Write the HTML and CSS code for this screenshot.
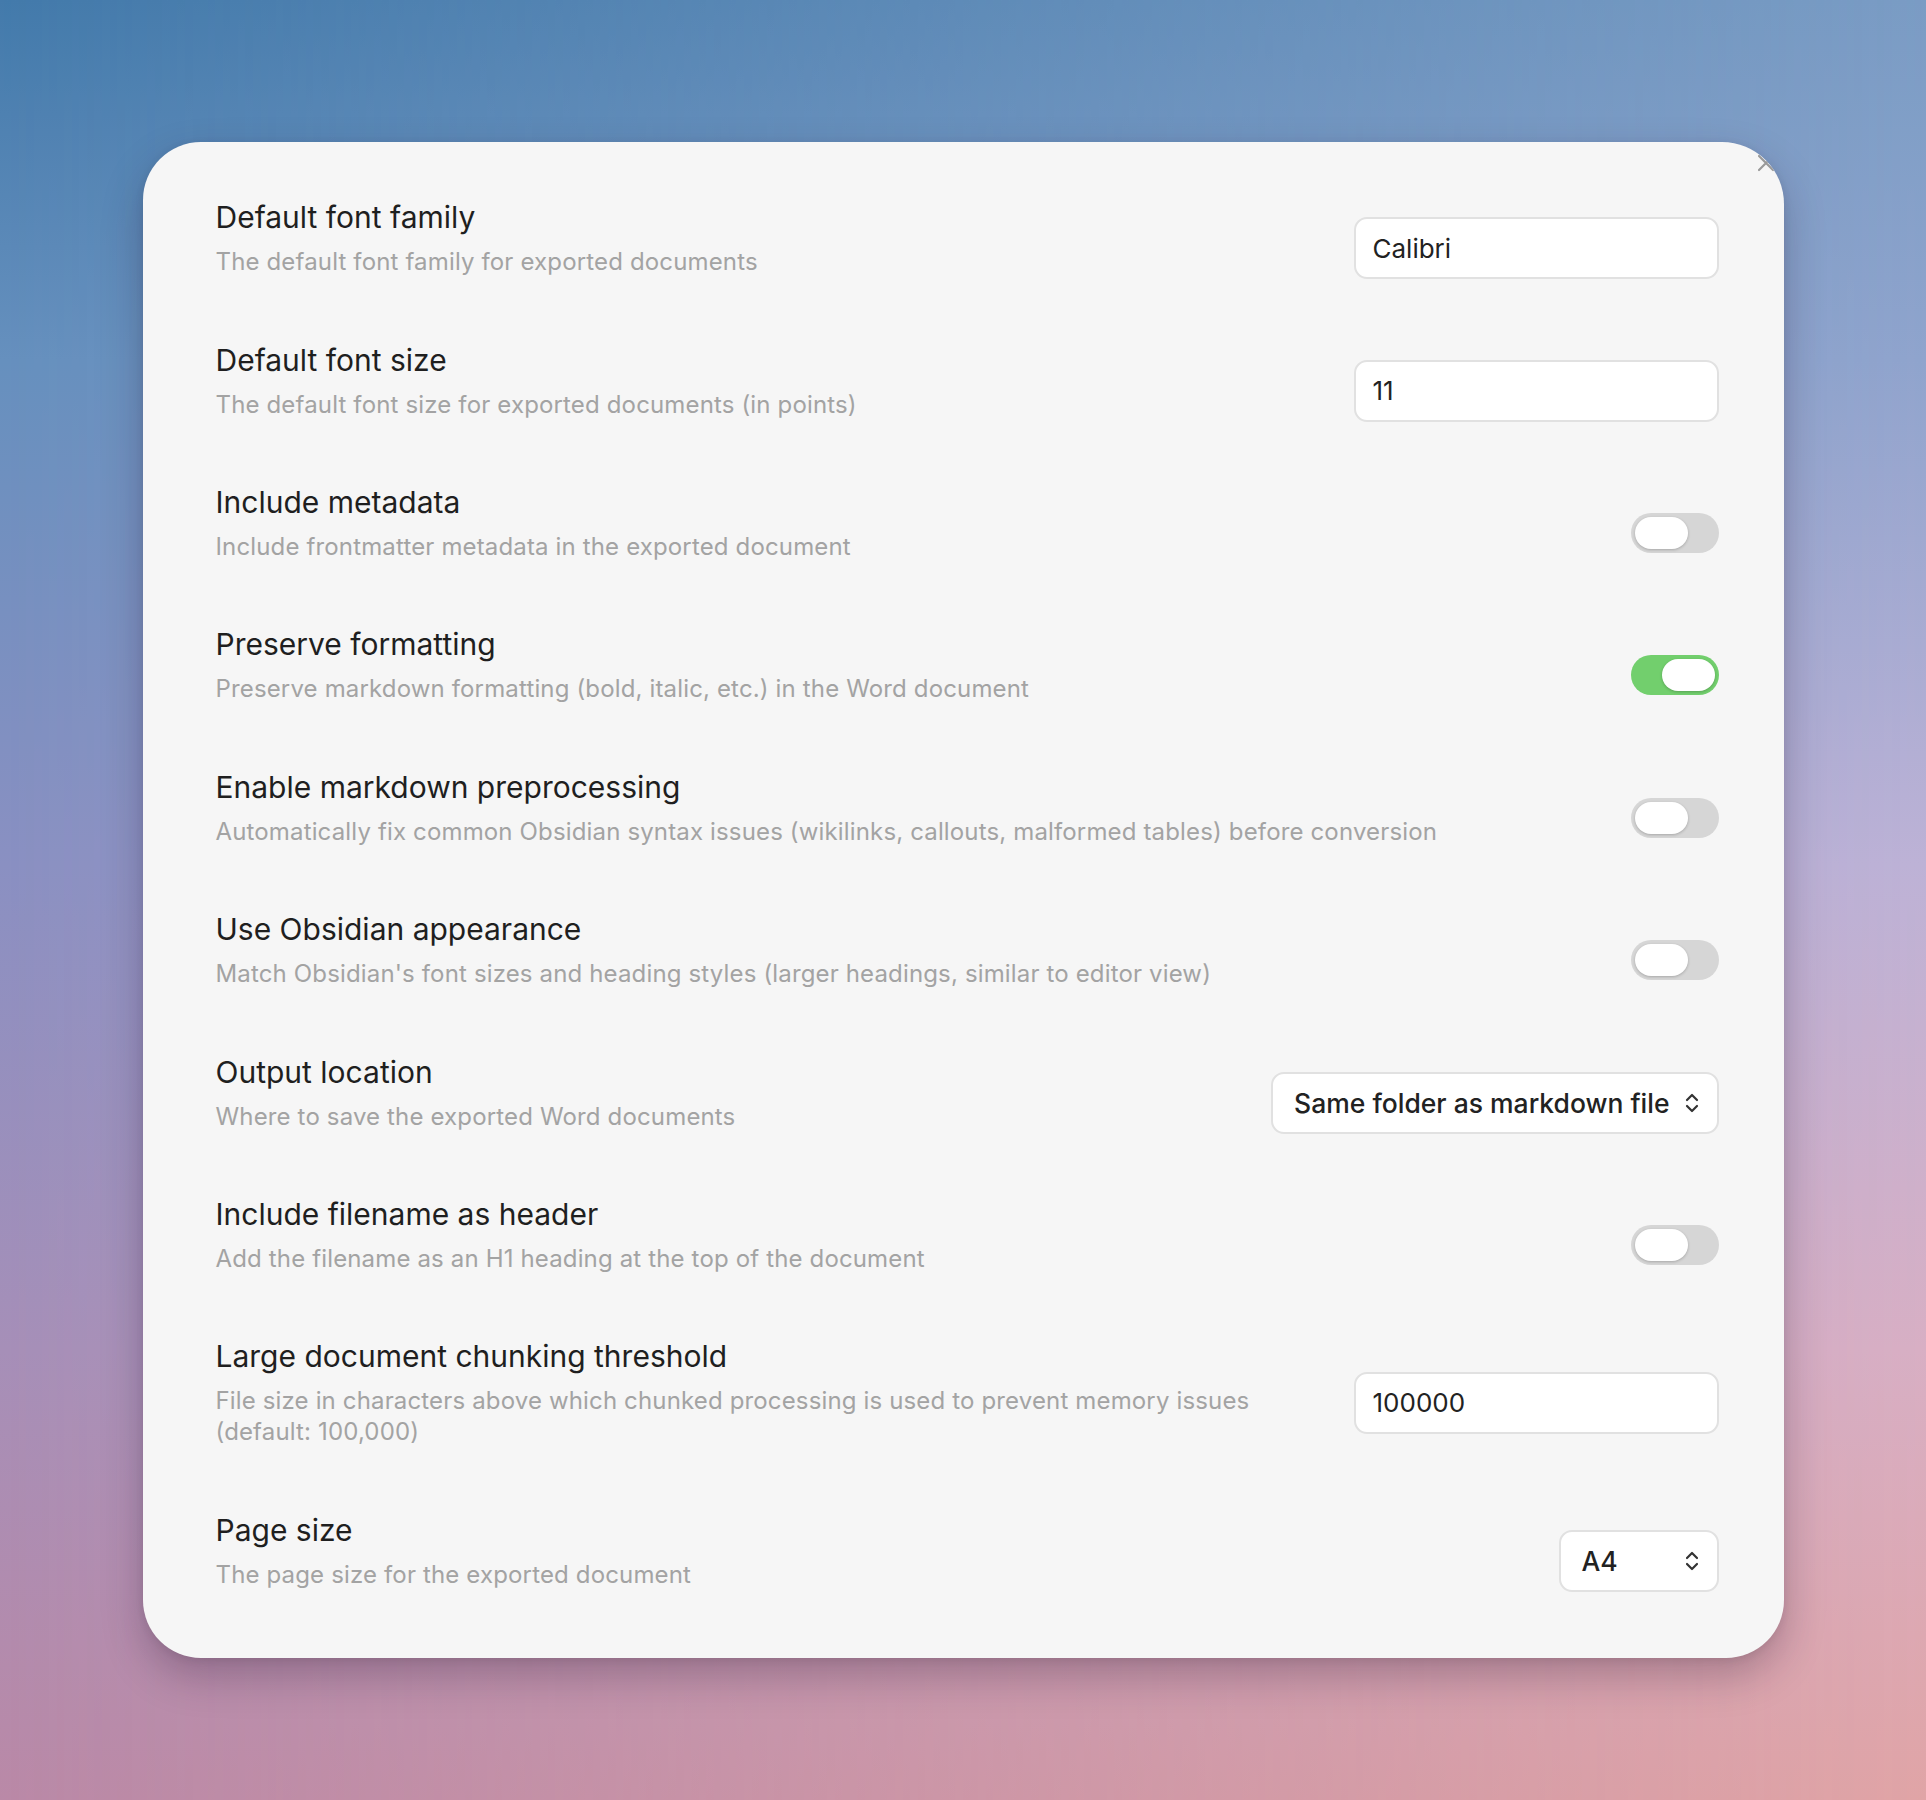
FILE: index.html
```html
<!DOCTYPE html>
<html lang="en">
<head>
    <meta charset="UTF-8">
    <meta name="viewport" content="width=device-width, initial-scale=1.0">
    <title>Word export settings</title>
    <link rel="stylesheet" href="styles.css">
</head>
<body>
    <div class="backdrop">
        <div class="modal">
            <button class="modal-close" aria-label="Close">
                <svg viewBox="0 0 20 20" width="20" height="20"><path d="M3 3L17 17M17 3L3 17" /></svg>
            </button>

            <div class="setting-item">
                <div class="setting-info">
                    <div class="setting-name">Default font family</div>
                    <div class="setting-desc">The default font family for exported documents</div>
                </div>
                <input class="text-input" type="text" value="Calibri">
            </div>

            <div class="setting-item">
                <div class="setting-info">
                    <div class="setting-name">Default font size</div>
                    <div class="setting-desc">The default font size for exported documents (in points)</div>
                </div>
                <input class="text-input" type="text" value="11">
            </div>

            <div class="setting-item">
                <div class="setting-info">
                    <div class="setting-name">Include metadata</div>
                    <div class="setting-desc">Include frontmatter metadata in the exported document</div>
                </div>
                <div class="toggle"><span class="knob"></span></div>
            </div>

            <div class="setting-item">
                <div class="setting-info">
                    <div class="setting-name">Preserve formatting</div>
                    <div class="setting-desc">Preserve markdown formatting (bold, italic, etc.) in the Word document</div>
                </div>
                <div class="toggle is-on"><span class="knob"></span></div>
            </div>

            <div class="setting-item">
                <div class="setting-info">
                    <div class="setting-name">Enable markdown preprocessing</div>
                    <div class="setting-desc">Automatically fix common Obsidian syntax issues (wikilinks, callouts, malformed tables) before conversion</div>
                </div>
                <div class="toggle"><span class="knob"></span></div>
            </div>

            <div class="setting-item">
                <div class="setting-info">
                    <div class="setting-name">Use Obsidian appearance</div>
                    <div class="setting-desc">Match Obsidian's font sizes and heading styles (larger headings, similar to editor view)</div>
                </div>
                <div class="toggle"><span class="knob"></span></div>
            </div>

            <div class="setting-item">
                <div class="setting-info">
                    <div class="setting-name">Output location</div>
                    <div class="setting-desc">Where to save the exported Word documents</div>
                </div>
                <div class="dropdown">
                    <span>Same folder as markdown file</span>
                    <svg viewBox="0 0 14 22" width="14" height="22"><path d="M2 8L7 3L12 8M2 14L7 19L12 14" /></svg>
                </div>
            </div>

            <div class="setting-item">
                <div class="setting-info">
                    <div class="setting-name">Include filename as header</div>
                    <div class="setting-desc">Add the filename as an H1 heading at the top of the document</div>
                </div>
                <div class="toggle"><span class="knob"></span></div>
            </div>

            <div class="setting-item">
                <div class="setting-info">
                    <div class="setting-name">Large document chunking threshold</div>
                    <div class="setting-desc">File size in characters above which chunked processing is used to prevent memory issues (default: 100,000)</div>
                </div>
                <input class="text-input" type="text" value="100000">
            </div>

            <div class="setting-item">
                <div class="setting-info">
                    <div class="setting-name">Page size</div>
                    <div class="setting-desc">The page size for the exported document</div>
                </div>
                <div class="dropdown">
                    <span>A4</span>
                    <svg viewBox="0 0 14 22" width="14" height="22"><path d="M2 8L7 3L12 8M2 14L7 19L12 14" /></svg>
                </div>
            </div>
        </div>
    </div>
</body>
</html>
```

FILE: styles.css
```css
body {
    margin: 0;
    font-family: 'Inter', 'Noto Sans', Arial, sans-serif;
    color: #222;
}

/* wallpaper: left column of colours, right column faded in on top */
.backdrop {
    position: relative;
    min-height: 1800px;
    display: flex;
    align-items: center;
    justify-content: center;
    background: linear-gradient(to bottom, #437aab 0%, #6690be 20%, #8a90c2 48%, #a68fb8 75%, #ba89a7 100%);
}
.backdrop::before {
    content: "";
    position: absolute;
    inset: 0;
    background: linear-gradient(to bottom, #7a9cc4 0%, #90a4cd 20%, #bdb2d6 48%, #d8afc4 75%, #e0a4a6 100%);
    -webkit-mask-image: linear-gradient(to right, transparent 0%, #000 100%);
    mask-image: linear-gradient(to right, transparent 0%, #000 100%);
}

.modal {
    position: relative;
    z-index: 1;
    box-sizing: border-box;
    width: 1641px;
    padding: 56px 65px 47px 73px;
    display: flex;
    flex-direction: column;
    gap: 42.4px;
    background: #f6f6f6;
    border-radius: 58px 62px 58px 58px;
    overflow: hidden;
    box-shadow: 0 18px 40px rgba(40, 20, 50, 0.28), 0 2px 8px rgba(0, 0, 0, 0.08);
}

/* sits in the rounded corner, so the modal clips half of it */
.modal-close {
    position: absolute;
    top: 11px;
    right: 8px;
    padding: 0;
    border: none;
    background: none;
    width: 20px;
    height: 20px;
}
.modal-close svg {
    display: block;
    stroke: #9a9a9a;
    stroke-width: 2.2;
    stroke-linecap: round;
    fill: none;
}

.setting-item {
    display: flex;
    align-items: center;
    gap: 40px;
}
.setting-info {
    flex: 1 1 auto;
    padding-bottom: 21px;
}
.setting-name {
    font-size: 30px;
    line-height: 38px;
    color: #1f1f1f;
}
.setting-desc {
    margin-top: 10px;
    font-size: 24px;
    line-height: 31px;
    color: #a3a3a3;
    letter-spacing: 0.15px;
}

.text-input {
    box-sizing: border-box;
    flex: none;
    width: 365px;
    height: 62px;
    padding: 0 17px;
    border: 2px solid #e1e1e1;
    border-radius: 13px;
    background: #fff;
    font-family: inherit;
    font-size: 26px;
    color: #222;
    outline: none;
}

.toggle {
    position: relative;
    flex: none;
    width: 88px;
    height: 40px;
    border-radius: 20px;
    background: #d6d6d6;
}
.toggle .knob {
    position: absolute;
    top: 4px;
    left: 4px;
    width: 53px;
    height: 32px;
    border-radius: 16px;
    background: #fff;
    box-shadow: 0 1px 3px rgba(0, 0, 0, 0.22);
}
.toggle.is-on {
    background: #72cf6d;
}
.toggle.is-on .knob {
    left: 31px;
}

.dropdown {
    box-sizing: border-box;
    flex: none;
    min-width: 160px;
    height: 62px;
    padding: 0 18px 0 21px;
    display: flex;
    align-items: center;
    justify-content: space-between;
    gap: 15px;
    border: 2px solid #e1e1e1;
    border-radius: 13px;
    background: #fff;
    font-size: 26.5px;
    font-weight: 500;
    color: #222;
}
.dropdown svg {
    flex: none;
    stroke: #333;
    stroke-width: 2.2;
    stroke-linecap: round;
    stroke-linejoin: round;
    fill: none;
}
```
